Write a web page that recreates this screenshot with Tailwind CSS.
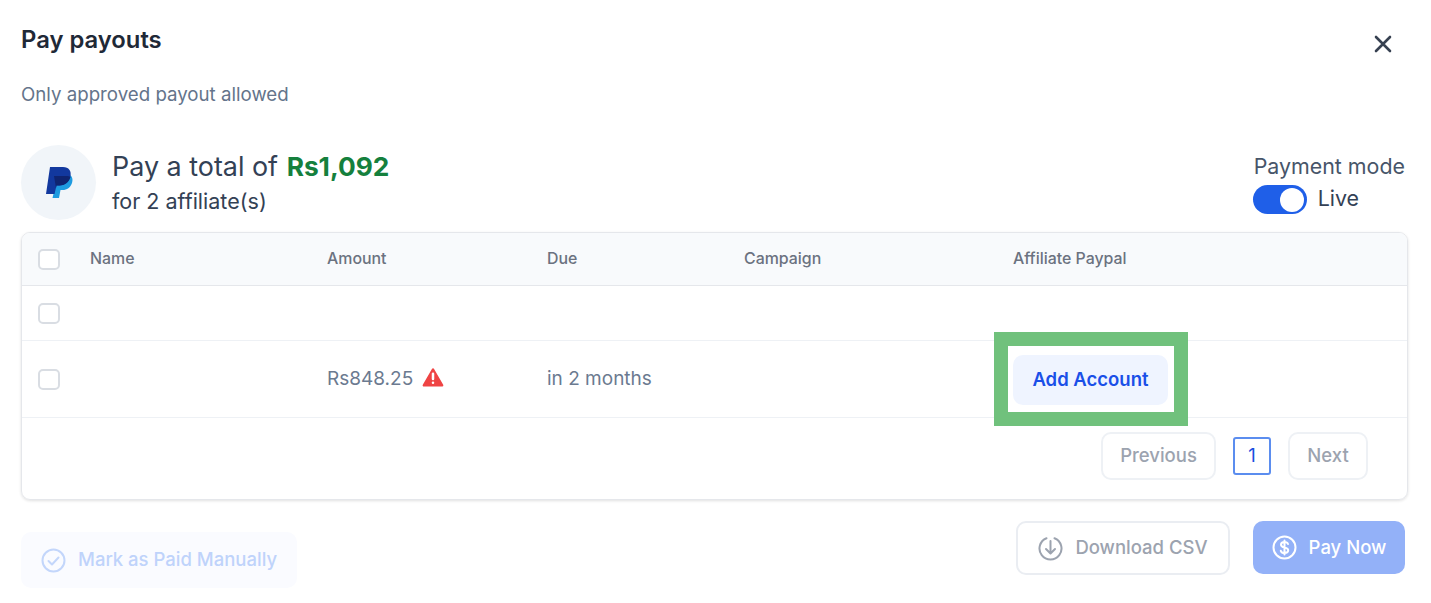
<!DOCTYPE html>
<html>
<head>
<meta charset="utf-8">
<script src="https://cdn.jsdelivr.net/npm/@tailwindcss/browser@4"></script>
</head>
<body class="bg-white">
<div class="relative w-[1431px] h-[603px] overflow-hidden bg-white font-['Inter',sans-serif] px-[21px]">
  <div class="flex justify-between h-[82px] pt-[25px]">
    <h1 class="text-[23.8px] leading-[30px] font-semibold text-[#1f2937]">Pay payouts</h1>
    <svg class="w-[22px] h-[22px] mt-[8px] mr-[16px] text-[#374151]" viewBox="0 0 22 22" fill="none" stroke="currentColor" stroke-width="2.6" stroke-linecap="round"><path d="M4 4 18 18M18 4 4 18"/></svg>
  </div>
  <p class="text-[18.7px] leading-[26px] text-[#64748b]">Only approved payout allowed</p>
  <div class="flex justify-between mt-[37px] h-[87px]">
    <div class="flex gap-[16px]">
      <div class="w-[75px] h-[75px] rounded-full bg-[#f1f5f9] flex items-center justify-center">
        <svg class="w-[28px] h-[33px]" viewBox="0 0 28 33">
          <path fill="#1e9be0" d="M25 9c2.500 1.500 3 5 2 8-1.500 4.500-5 7-9.500 7h-2L14 32H7.500L11 17z"/>
          <path fill="#12389e" d="M5 1h13c6 0 8.500 4 7.500 9-1 6-6 9.500-11 9.500h-3L9.500 28H1z"/>
          <path fill="#0f2470" d="M9 10h12c1.800 0 3.500.3 4.500 1C24 16 19.500 19.500 14.500 19.500h-3L11 22z"/>
        </svg>
      </div>
      <div class="pt-[5px]">
        <p class="text-[26.9px] leading-[32px] text-[#334155]">Pay a total of <span class="ml-[1px] text-[26.3px] font-bold text-[#15803d]">Rs1,092</span></p>
        <p class="text-[21.5px] leading-[30px] mt-[3px] text-[#334155]">for 2 affiliate(s)</p>
      </div>
    </div>
    <div class="pr-[5px] pt-[7px]">
      <p class="text-[21.4px] leading-[28px] text-[#475569]">Payment mode</p>
      <div class="flex items-center gap-[11px] mt-[5px]">
        <div class="w-[54px] h-[29px] -ml-[1px] rounded-full bg-[#1f5fe8] flex items-center justify-end pr-[3px]">
          <div class="w-[24px] h-[24px] rounded-full bg-white"></div>
        </div>
        <span class="text-[21.4px] leading-[28px] -mt-[3px] text-[#334155]">Live</span>
      </div>
    </div>
  </div>
  <div class="border border-[#e5e7eb] rounded-[9px] shadow-[0_1px_3px_rgba(0,0,0,0.12)] w-[1387px] h-[268px] overflow-hidden">
    <div class="grid grid-cols-[52px_237px_220px_197px_269px_1fr] items-center pl-[16px] h-[53px] bg-[#f8fafc] border-b border-[#e5e7eb] text-[15.9px] font-medium text-[#6b7280]">
      <div class="w-[22px] h-[21px] rounded-[5px] border-2 border-[#d9dde3] bg-white"></div>
      <span>Name</span><span>Amount</span><span>Due</span><span>Campaign</span><span>Affiliate Paypal</span>
    </div>
    <div class="flex items-center pl-[16px] h-[55px] border-b border-[#eef1f5]">
      <div class="w-[22px] h-[21px] rounded-[5px] border-2 border-[#d9dde3] bg-white"></div>
    </div>
    <div class="grid grid-cols-[52px_237px_220px_197px_1fr] items-center pl-[16px] h-[77px] border-b border-[#eef1f5] text-[19px] text-[#6b7a90]">
      <div class="w-[22px] h-[21px] rounded-[5px] border-2 border-[#d9dde3] bg-white"></div>
      <span></span>
      <span class="flex items-center gap-[9px] pt-[1px]">Rs848.25
        <svg class="w-[22px] h-[21px] -mt-[5px]" viewBox="0 0 21 20"><path fill="#ef4444" stroke="#ef4444" stroke-width="2.400" stroke-linejoin="round" d="M10.500 2.500 1.800 17.500h17.400z"/><path stroke="#fff" stroke-width="2.400" stroke-linecap="round" d="M10.500 6.500v5"/><circle cx="10.500" cy="15" r="1.200" fill="#fff"/></svg>
      </span>
      <span class="pt-[1px]">in 2 months</span>
      <span></span>
    </div>
    <div class="flex justify-end items-center h-[75px] pr-[39px] gap-[17px] text-[18.500px] font-medium">
      <button class="w-[115px] h-[48px] rounded-[10px] border-2 border-[#eef1f5] text-[#9ca3af]">Previous</button>
      <span class="w-[38px] h-[38px] rounded-[3px] border-2 border-[#5b8def] text-[#1a4fe0] flex items-center justify-center font-normal">1</span>
      <button class="w-[80px] h-[48px] rounded-[10px] border-2 border-[#eef1f5] text-[#9ca3af]">Next</button>
    </div>
  </div>
  <div class="flex justify-between items-start mt-[21px] pr-[5px] text-[18.500px] font-medium">
    <button class="flex items-center gap-[12px] w-[276px] h-[56px] mt-[11px] rounded-[10px] bg-[#fafbff] px-[20px] text-[#bfd3fb] whitespace-nowrap">
      <svg class="w-[25px] h-[25px] shrink-0" viewBox="0 0 25 25" fill="none" stroke="#c3d6fb" stroke-width="2" stroke-linecap="round" stroke-linejoin="round"><circle cx="12.500" cy="12.500" r="11"/><path d="M7.500 13l3.500 3.500 6.500-7"/></svg>
      Mark as Paid Manually
    </button>
    <div class="flex gap-[23px]">
      <button class="flex items-center justify-center gap-[12px] w-[214px] h-[54px] rounded-[10px] border-2 border-[#eaedf2] text-[#9ca3af]">
        <svg class="w-[25px] h-[25px]" viewBox="0 0 25 25" fill="none" stroke="#9ca3af" stroke-width="2" stroke-linecap="round" stroke-linejoin="round"><path d="M8.500 2.200a11 11 0 1 0 8 0"/><path d="M12.500 5v12M8 13l4.500 4.500L17 13"/></svg>
        Download CSV
      </button>
      <button class="flex items-center justify-center gap-[12px] w-[152px] h-[53px] rounded-[10px] bg-[#93b1f8] text-white">
        <svg class="w-[25px] h-[25px]" viewBox="0 0 25 25" fill="none" stroke="#fff" stroke-width="2" stroke-linecap="round" stroke-linejoin="round"><circle cx="12.500" cy="12.500" r="11"/><path d="M16 9c-.5-1.300-2-2-3.500-2-2 0-3.500 1-3.500 2.700 0 3.800 7.200 1.800 7.200 5.600 0 1.700-1.600 2.700-3.700 2.700-1.700 0-3.200-.8-3.700-2.200M12.500 5.500v14"/></svg>
        Pay Now
      </button>
    </div>
  </div>
  <div class="absolute left-[994px] top-[332px] w-[194px] h-[94px] border-[14px] border-[#70c17c] bg-white flex items-center justify-center pr-[1px] pt-[1px]">
    <button class="w-[155px] h-[50px] rounded-[10px] bg-[#eff4ff] text-[18.500px] font-semibold text-[#1a4fe8]">Add Account</button>
  </div>
</div>
</body>
</html>
